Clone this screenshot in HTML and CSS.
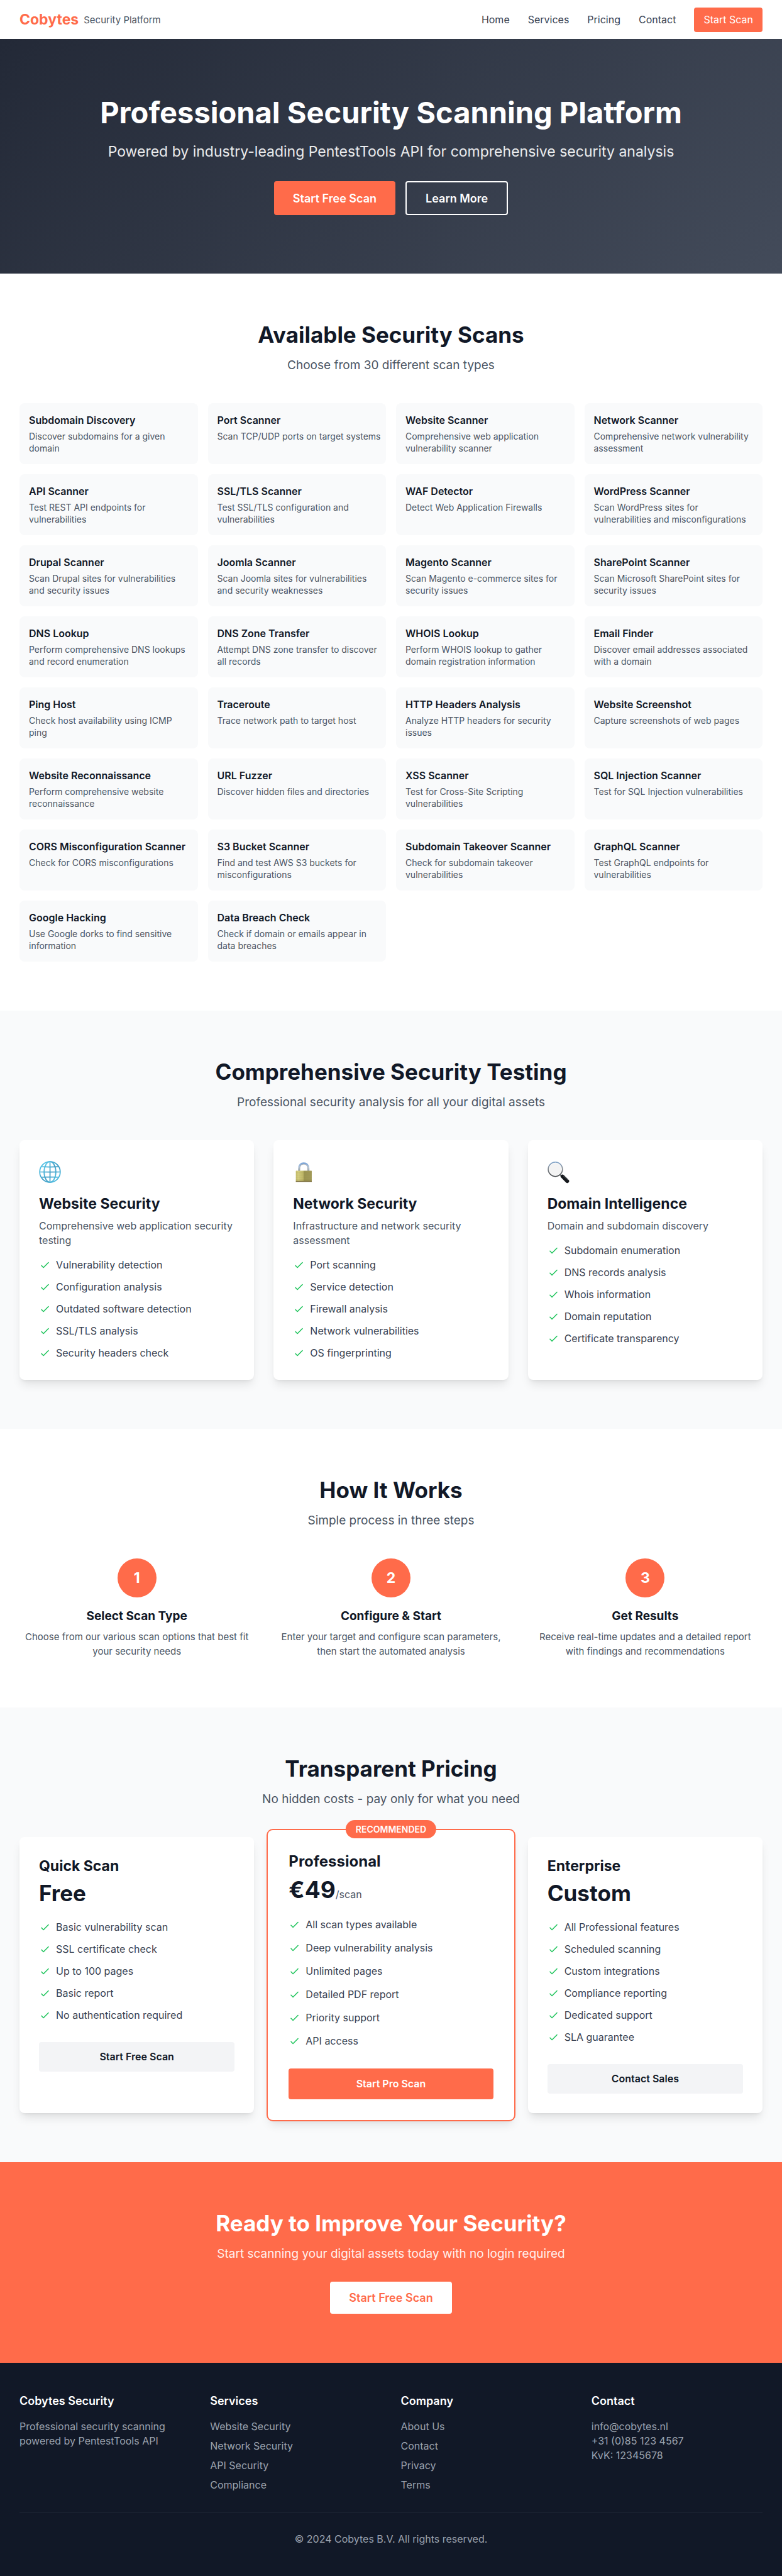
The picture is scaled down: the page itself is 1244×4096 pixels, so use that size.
FILE: index.html
```html
<!DOCTYPE html>
<html lang="en">
<head>
<meta charset="utf-8">
<title>Cobytes Security Platform</title>
<link rel="stylesheet" href="styles.css">
</head>
<body>
<header class="site-header">
  <div class="container header-row">
    <a class="brand" href="#"><span class="brand-name">Cobytes</span><span class="brand-sub">Security Platform</span></a>
    <nav class="nav">
      <a href="#">Home</a>
      <a href="#services">Services</a>
      <a href="#pricing">Pricing</a>
      <a href="#contact">Contact</a>
      <a class="nav-cta" href="#scan">Start Scan</a>
    </nav>
  </div>
</header>

<main>
  <section class="hero">
    <h1>Professional Security Scanning Platform</h1>
    <p>Powered by industry-leading PentestTools API for comprehensive security analysis</p>
    <div class="hero-actions">
      <a class="btn btn-primary" href="#scan">Start Free Scan</a>
      <a class="btn btn-outline" href="#services">Learn More</a>
    </div>
  </section>

  <section class="section" id="scan">
    <div class="container">
      <h2>Available Security Scans</h2>
      <p class="lead">Choose from 30 different scan types</p>
      <div class="scan-grid" id="scan-grid">
        <article class="scan"><h3>Subdomain Discovery</h3><p>Discover subdomains for a given domain</p></article>
        <article class="scan"><h3>Port Scanner</h3><p>Scan TCP/UDP ports on target systems</p></article>
        <article class="scan"><h3>Website Scanner</h3><p>Comprehensive web application vulnerability scanner</p></article>
        <article class="scan"><h3>Network Scanner</h3><p>Comprehensive network vulnerability assessment</p></article>
        <article class="scan"><h3>API Scanner</h3><p>Test REST API endpoints for vulnerabilities</p></article>
        <article class="scan"><h3>SSL/TLS Scanner</h3><p>Test SSL/TLS configuration and vulnerabilities</p></article>
        <article class="scan"><h3>WAF Detector</h3><p>Detect Web Application Firewalls</p></article>
        <article class="scan"><h3>WordPress Scanner</h3><p>Scan WordPress sites for vulnerabilities and misconfigurations</p></article>
        <article class="scan"><h3>Drupal Scanner</h3><p>Scan Drupal sites for vulnerabilities and security issues</p></article>
        <article class="scan"><h3>Joomla Scanner</h3><p>Scan Joomla sites for vulnerabilities and security weaknesses</p></article>
        <article class="scan"><h3>Magento Scanner</h3><p>Scan Magento e-commerce sites for security issues</p></article>
        <article class="scan"><h3>SharePoint Scanner</h3><p>Scan Microsoft SharePoint sites for security issues</p></article>
        <article class="scan"><h3>DNS Lookup</h3><p>Perform comprehensive DNS lookups and record enumeration</p></article>
        <article class="scan"><h3>DNS Zone Transfer</h3><p>Attempt DNS zone transfer to discover all records</p></article>
        <article class="scan"><h3>WHOIS Lookup</h3><p>Perform WHOIS lookup to gather domain registration information</p></article>
        <article class="scan"><h3>Email Finder</h3><p>Discover email addresses associated with a domain</p></article>
        <article class="scan"><h3>Ping Host</h3><p>Check host availability using ICMP<br>ping</p></article>
        <article class="scan"><h3>Traceroute</h3><p>Trace network path to target host</p></article>
        <article class="scan"><h3>HTTP Headers Analysis</h3><p>Analyze HTTP headers for security issues</p></article>
        <article class="scan"><h3>Website Screenshot</h3><p>Capture screenshots of web pages</p></article>
        <article class="scan"><h3>Website Reconnaissance</h3><p>Perform comprehensive website reconnaissance</p></article>
        <article class="scan"><h3>URL Fuzzer</h3><p>Discover hidden files and directories</p></article>
        <article class="scan"><h3>XSS Scanner</h3><p>Test for Cross-Site Scripting vulnerabilities</p></article>
        <article class="scan"><h3>SQL Injection Scanner</h3><p>Test for SQL Injection vulnerabilities</p></article>
        <article class="scan"><h3>CORS Misconfiguration Scanner</h3><p>Check for CORS misconfigurations</p></article>
        <article class="scan"><h3>S3 Bucket Scanner</h3><p>Find and test AWS S3 buckets for misconfigurations</p></article>
        <article class="scan"><h3>Subdomain Takeover Scanner</h3><p>Check for subdomain takeover vulnerabilities</p></article>
        <article class="scan"><h3>GraphQL Scanner</h3><p>Test GraphQL endpoints for vulnerabilities</p></article>
        <article class="scan"><h3>Google Hacking</h3><p>Use Google dorks to find sensitive information</p></article>
        <article class="scan"><h3>Data Breach Check</h3><p>Check if domain or emails appear in data breaches</p></article>
      </div>
    </div>
  </section>

  <section class="section section-tint" id="services">
    <div class="container">
      <h2>Comprehensive Security Testing</h2>
      <p class="lead">Professional security analysis for all your digital assets</p>
      <div class="columns">
        <article class="card">
          <svg class="card-icon" viewBox="0 0 36 36" aria-hidden="true">
            <defs><linearGradient id="globe" x1="0" y1="0" x2="1" y2="1"><stop offset="0" stop-color="#5fd0f0"/><stop offset=".55" stop-color="#3f9cc4"/><stop offset="1" stop-color="#56c8ea"/></linearGradient></defs>
            <g fill="none" stroke="url(#globe)" stroke-width="1.800">
              <circle cx="18" cy="18" r="16.8"/>
              <ellipse cx="18" cy="18" rx="9.6" ry="16.8"/>
              <path d="M18 1.2Q18.2 18 18 34.8M1.2 18Q18 18.2 34.8 18M4 9.4Q18 10.4 32 9.4M4 26.6Q18 25.6 32 26.6"/>
            </g>
          </svg>
          <h3>Website Security</h3>
          <p>Comprehensive web application security testing</p>
          <ul class="checks">
            <li>Vulnerability detection</li>
            <li>Configuration analysis</li>
            <li>Outdated software detection</li>
            <li>SSL/TLS analysis</li>
            <li>Security headers check</li>
          </ul>
        </article>
        <article class="card">
          <svg class="card-icon" viewBox="0 0 36 36" aria-hidden="true">
            <defs>
              <linearGradient id="brass"><stop offset="0" stop-color="#c5bd6c"/><stop offset=".15" stop-color="#d6cf80"/><stop offset=".48" stop-color="#bdb566"/><stop offset=".5" stop-color="#9c9450"/><stop offset="1" stop-color="#a39b5a"/></linearGradient>
              <linearGradient id="shackle" x1="0" y1="0" x2="0" y2="1"><stop offset="0" stop-color="#7ea6d8"/><stop offset=".5" stop-color="#b8c8d8"/><stop offset="1" stop-color="#98a2aa"/></linearGradient>
            </defs>
            <path d="M9.800 17V12C9.800 6.500 13.300 3.800 17.700 3.800S25.600 6.500 25.600 12V17" fill="none" stroke="url(#shackle)" stroke-width="2.800"/>
            <path d="M11.400 17V12.300C11.400 7.800 14.100 5.400 17.700 5.400S24 7.800 24 12.300V17" fill="none" stroke="#6c6f70" stroke-width=".5"/>
            <rect x="4.800" y="16" width="26" height="18" rx=".6" fill="url(#brass)"/>
            <path d="M4.800 19.500H30.800M4.800 23H30.800M4.800 26.500H30.800M4.800 30H30.800" stroke="#8f8845" stroke-width=".5" opacity=".5"/>
            <rect x="4.800" y="32.500" width="26" height="1.700" fill="#7a6d38"/>
          </svg>
          <h3>Network Security</h3>
          <p>Infrastructure and network security assessment</p>
          <ul class="checks">
            <li>Port scanning</li>
            <li>Service detection</li>
            <li>Firewall analysis</li>
            <li>Network vulnerabilities</li>
            <li>OS fingerprinting</li>
          </ul>
        </article>
        <article class="card">
          <svg class="card-icon" viewBox="0 0 36 36" aria-hidden="true">
            <defs><linearGradient id="rim" x1="0" y1="0" x2="0" y2="1"><stop offset="0" stop-color="#86a8cc"/><stop offset=".45" stop-color="#868c92"/><stop offset="1" stop-color="#4a4d50"/></linearGradient></defs>
            <path d="M20.500 22.500L24 25.500" stroke="#777c80" stroke-width="2.600"/>
            <path d="M24.500 25.200L32.300 33" stroke="#15181c" stroke-width="6" stroke-linecap="round"/>
            <path d="M26 24.600L33 31" stroke="#555b62" stroke-width=".9" stroke-linecap="round"/>
            <circle cx="12.800" cy="13.600" r="11.600" fill="#f3f3f3" stroke="url(#rim)" stroke-width="1.800"/>
            <circle cx="12.800" cy="13.600" r="10.300" fill="none" stroke="#fff" stroke-width=".8"/>
          </svg>
          <h3>Domain Intelligence</h3>
          <p>Domain and subdomain discovery</p>
          <ul class="checks">
            <li>Subdomain enumeration</li>
            <li>DNS records analysis</li>
            <li>Whois information</li>
            <li>Domain reputation</li>
            <li>Certificate transparency</li>
          </ul>
        </article>
      </div>
    </div>
  </section>

  <section class="section">
    <div class="container">
      <h2>How It Works</h2>
      <p class="lead">Simple process in three steps</p>
      <div class="columns">
        <article class="step"><div class="step-number">1</div><h3>Select Scan Type</h3><p>Choose from our various scan options that best fit your security needs</p></article>
        <article class="step"><div class="step-number">2</div><h3>Configure &amp; Start</h3><p>Enter your target and configure scan parameters, then start the automated analysis</p></article>
        <article class="step"><div class="step-number">3</div><h3>Get Results</h3><p>Receive real-time updates and a detailed report with findings and recommendations</p></article>
      </div>
    </div>
  </section>

  <section class="section section-tint" id="pricing">
    <div class="container">
      <h2>Transparent Pricing</h2>
      <p class="lead">No hidden costs - pay only for what you need</p>
      <div class="columns">
        <article class="card plan">
          <h3>Quick Scan</h3>
          <div class="price">Free</div>
          <ul class="checks">
            <li>Basic vulnerability scan</li>
            <li>SSL certificate check</li>
            <li>Up to 100 pages</li>
            <li>Basic report</li>
            <li>No authentication required</li>
          </ul>
          <button class="plan-button" type="button">Start Free Scan</button>
        </article>
        <article class="card plan plan-featured">
          <span class="badge">RECOMMENDED</span>
          <h3>Professional</h3>
          <div class="price">€49<span class="price-unit">/scan</span></div>
          <ul class="checks">
            <li>All scan types available</li>
            <li>Deep vulnerability analysis</li>
            <li>Unlimited pages</li>
            <li>Detailed PDF report</li>
            <li>Priority support</li>
            <li>API access</li>
          </ul>
          <button class="plan-button" type="button">Start Pro Scan</button>
        </article>
        <article class="card plan">
          <h3>Enterprise</h3>
          <div class="price">Custom</div>
          <ul class="checks">
            <li>All Professional features</li>
            <li>Scheduled scanning</li>
            <li>Custom integrations</li>
            <li>Compliance reporting</li>
            <li>Dedicated support</li>
            <li>SLA guarantee</li>
          </ul>
          <button class="plan-button" type="button">Contact Sales</button>
        </article>
      </div>
    </div>
  </section>

  <section class="section cta">
    <h2>Ready to Improve Your Security?</h2>
    <p class="lead">Start scanning your digital assets today with no login required</p>
    <a class="btn btn-light" href="#scan">Start Free Scan</a>
  </section>
</main>

<footer class="site-footer" id="contact">
  <div class="container">
    <div class="footer-grid">
      <div>
        <h4>Cobytes Security</h4>
        <p>Professional security scanning powered by PentestTools API</p>
      </div>
      <div>
        <h4>Services</h4>
        <ul class="footer-links">
          <li><a href="#">Website Security</a></li>
          <li><a href="#">Network Security</a></li>
          <li><a href="#">API Security</a></li>
          <li><a href="#">Compliance</a></li>
        </ul>
      </div>
      <div>
        <h4>Company</h4>
        <ul class="footer-links">
          <li><a href="#">About Us</a></li>
          <li><a href="#">Contact</a></li>
          <li><a href="#">Privacy</a></li>
          <li><a href="#">Terms</a></li>
        </ul>
      </div>
      <div>
        <h4>Contact</h4>
        <p>info@cobytes.nl<br>+31 (0)85 123 4567<br>KvK: 12345678</p>
      </div>
    </div>
    <p class="copyright">© 2024 Cobytes B.V. All rights reserved.</p>
  </div>
</footer>
<script src="script.js"></script>
</body>
</html>
```
FILE: script.js
```js
// Put a tick icon in front of every feature list entry.
document.querySelectorAll('.checks li').forEach(function (item) {
  item.insertAdjacentHTML('afterbegin',
    '<svg class="tick" viewBox="0 0 24 24" aria-hidden="true"><path d="M5 13l4 4L19 7"/></svg>');
});
```
FILE: styles.css
```css
* {
  box-sizing: border-box;
  margin: 0;
  padding: 0;
}

:root {
  --coral: #ff6b4a;
  --ink: #111827;
  --slate: #374151;
  --muted: #4b5563;
  --tint: #f9fafb;
}

body {
  font-family: Inter, "Liberation Sans", sans-serif;
  font-size: 16px;
  line-height: 23px;
  color: var(--ink);
  background: #fff;
}

a {
  color: inherit;
  text-decoration: none;
}

ul {
  list-style: none;
}

.container {
  max-width: 1280px;
  margin: 0 auto;
  padding: 0 31px;
}

/* Header */
.header-row {
  display: flex;
  align-items: center;
  justify-content: space-between;
  height: 62px;
}

.brand {
  display: flex;
  align-items: center;
  gap: 8px;
}

.brand-name {
  font-size: 23px;
  line-height: 31px;
  font-weight: 700;
  color: var(--coral);
}

.brand-sub {
  font-size: 15px;
  color: var(--muted);
}

.nav {
  display: flex;
  align-items: center;
  gap: 29px;
  color: var(--slate);
}

.nav-cta {
  padding: 8px 15px;
  border-radius: 4px;
  color: #fff;
  background: var(--coral);
}

/* Hero */
.hero {
  padding: 93px 31px;
  text-align: center;
  color: #fff;
  background: linear-gradient(135deg, #232937, #434b5a);
}

.hero h1 {
  margin-bottom: 24px;
  font-size: 47px;
  line-height: 47px;
  font-weight: 700;
}

.hero p {
  margin-bottom: 31px;
  font-size: 23px;
  line-height: 31px;
  opacity: 0.9;
}

.hero-actions {
  display: flex;
  justify-content: center;
  gap: 16px;
}

.btn {
  display: inline-flex;
  align-items: center;
  justify-content: center;
  padding: 12px 30px;
  border-radius: 4px;
  font-size: 18px;
  line-height: 27px;
  font-weight: 600;
}

.btn-primary {
  color: #fff;
  background: var(--coral);
}

.btn-outline {
  padding: 12px 30px 11px;
  border: 2px solid #fff;
}

.btn-light {
  color: var(--coral);
  background: #fff;
}

/* Sections */
.section {
  padding: 78px 0;
}

.section-tint {
  background: var(--tint);
}

h2 {
  margin-bottom: 15px;
  font-size: 35px;
  line-height: 39px;
  font-weight: 700;
  text-align: center;
}

.lead {
  margin-bottom: 47px;
  font-size: 19px;
  line-height: 27px;
  text-align: center;
  color: var(--muted);
}

.columns {
  display: grid;
  grid-template-columns: repeat(3, 1fr);
  gap: 31px;
}

/* Scan list */
.scan-grid {
  display: grid;
  grid-template-columns: repeat(4, 1fr);
  gap: 16px;
}

.scan {
  padding: 16px 8px 16px 15px;
  border-radius: 8px;
  background: var(--tint);
}

.scan h3 {
  margin-bottom: 4px;
  font-size: 16px;
  line-height: 23px;
  font-weight: 600;
}

.scan p {
  font-size: 14px;
  line-height: 19px;
  color: var(--muted);
}

/* Cards */
.card {
  padding: 31px;
  border-radius: 8px;
  background: #fff;
  box-shadow: 0 10px 15px -3px rgba(0, 0, 0, 0.1), 0 4px 6px -4px rgba(0, 0, 0, 0.1);
}

.card-icon {
  display: block;
  width: 35px;
  height: 39px;
  margin-bottom: 16px;
}

.card h3 {
  margin-bottom: 8px;
  font-size: 23px;
  line-height: 31px;
  font-weight: 700;
}

.card p {
  margin-bottom: 16px;
  color: var(--muted);
}

.checks {
  display: grid;
  gap: 12px;
  color: var(--slate);
}

.checks li {
  display: flex;
  align-items: center;
  gap: 8px;
}

.tick {
  width: 19px;
  height: 19px;
  fill: none;
  stroke: #22c55e;
  stroke-width: 2;
  stroke-linecap: round;
  stroke-linejoin: round;
}

/* Steps */
.step {
  text-align: center;
}

.step-number {
  display: flex;
  align-items: center;
  justify-content: center;
  width: 62px;
  height: 62px;
  margin: 0 auto 16px;
  border-radius: 50%;
  font-size: 23px;
  font-weight: 700;
  color: #fff;
  background: var(--coral);
}

.step h3 {
  margin-bottom: 8px;
  font-size: 19px;
  line-height: 27px;
  font-weight: 700;
}

.step p {
  padding: 0 4px;
  font-size: 15px;
  color: var(--muted);
}

/* Pricing */
.price {
  margin-bottom: 23px;
  font-size: 35px;
  line-height: 39px;
  font-weight: 700;
}

.price-unit {
  font-size: 16px;
  line-height: 16px;
  font-weight: 400;
  color: var(--muted);
}

.plan-button {
  display: block;
  width: 100%;
  margin-top: 31px;
  padding: 12px;
  border: 0;
  border-radius: 4px;
  font: inherit;
  font-weight: 600;
  color: var(--ink);
  background: #f3f4f6;
}

.plan-featured {
  position: relative;
  margin: -11px -9px;
  padding: 33px;
  box-shadow: 0 0 0 2px var(--coral), 0 10px 15px -3px rgba(0, 0, 0, 0.1), 0 4px 6px -4px rgba(0, 0, 0, 0.1);
}

.plan-featured h3 {
  font-size: 24px;
  line-height: 33px;
}

.plan-featured .price {
  font-size: 37px;
  line-height: 41px;
}

.plan-featured li {
  line-height: 25px;
}

.plan-featured .plan-button {
  line-height: 25px;
  color: #fff;
  background: var(--coral);
}

.badge {
  position: absolute;
  top: -16px;
  left: 50%;
  transform: translateX(-50%);
  padding: 4px 16px;
  border-radius: 15px;
  font-size: 14px;
  line-height: 21px;
  font-weight: 600;
  color: #fff;
  background: var(--coral);
}

/* Call to action */
.cta {
  text-align: center;
  color: #fff;
  background: var(--coral);
}

.cta .lead {
  margin-bottom: 31px;
  color: inherit;
  opacity: 0.9;
}

/* Footer */
.site-footer {
  padding: 47px 0;
  color: #9ca3af;
  background: var(--ink);
}

.footer-grid {
  display: grid;
  grid-template-columns: repeat(4, 1fr);
  gap: 31px;
  margin-bottom: 31px;
}

.site-footer h4 {
  margin-bottom: 16px;
  font-size: 18px;
  line-height: 27px;
  font-weight: 600;
  color: #fff;
}

.footer-links {
  display: grid;
  gap: 8px;
}

.copyright {
  padding-top: 31px;
  border-top: 1px solid #1f2937;
  text-align: center;
}
```
